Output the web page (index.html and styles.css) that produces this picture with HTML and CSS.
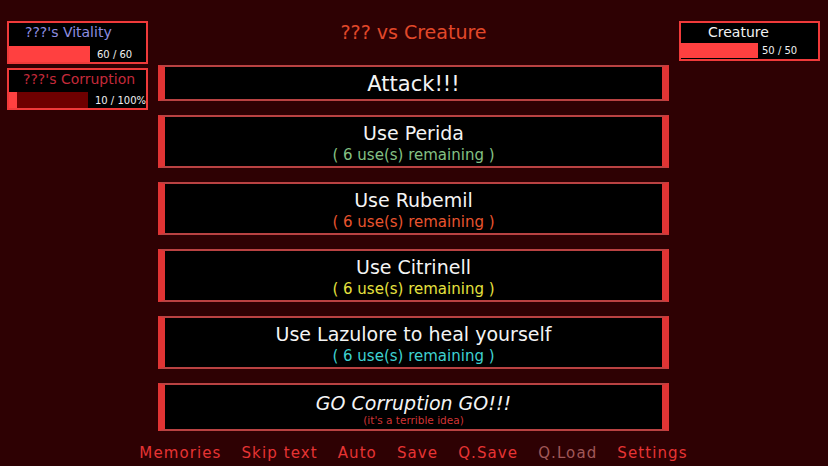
FILE: index.html
```html
<!DOCTYPE html>
<html>
<head>
<meta charset="utf-8">
<link rel="stylesheet" href="styles.css">
</head>
<body>
<div class="screen">
  <div class="side side-left">
    <div class="stat">
      <div class="stat-title vitality">???'s Vitality</div>
      <div class="stat-row">
        <div class="bar"><div class="fill" style="width:100%"></div></div>
        <div class="value">60 / 60</div>
      </div>
    </div>
    <div class="stat">
      <div class="stat-title corruption">???'s Corruption</div>
      <div class="stat-row">
        <div class="bar bar-dark"><div class="fill" style="width:10%"></div></div>
        <div class="value">10 / 100%</div>
      </div>
    </div>
  </div>

  <div class="center">
    <div class="headline">??? vs Creature</div>
    <div class="choices">
      <div class="choice choice-single"><span class="choice-main big">Attack!!!</span></div>
      <div class="choice choice-double">
        <span class="choice-main">Use Perida</span>
        <span class="choice-sub green">( 6 use(s) remaining )</span>
      </div>
      <div class="choice choice-double">
        <span class="choice-main">Use Rubemil</span>
        <span class="choice-sub orange">( 6 use(s) remaining )</span>
      </div>
      <div class="choice choice-double">
        <span class="choice-main">Use Citrinell</span>
        <span class="choice-sub yellow">( 6 use(s) remaining )</span>
      </div>
      <div class="choice choice-double">
        <span class="choice-main">Use Lazulore to heal yourself</span>
        <span class="choice-sub cyan">( 6 use(s) remaining )</span>
      </div>
      <div class="choice choice-go">
        <span class="choice-main italic">GO Corruption GO!!!</span>
        <span class="choice-note">(it's a terrible idea)</span>
      </div>
    </div>
  </div>

  <div class="side side-right">
    <div class="stat stat-creature">
      <div class="stat-title creature">Creature</div>
      <div class="stat-row">
        <div class="bar bar-creature"><div class="fill" style="width:100%"></div></div>
        <div class="value value-creature">50 / 50</div>
      </div>
    </div>
  </div>

  <nav class="quick-menu">
    <span class="qm">Memories</span>
    <span class="qm">Skip text</span>
    <span class="qm">Auto</span>
    <span class="qm">Save</span>
    <span class="qm">Q.Save</span>
    <span class="qm qm-disabled">Q.Load</span>
    <span class="qm">Settings</span>
  </nav>
</div>
</body>
</html>
```

FILE: styles.css
```css
* { box-sizing: border-box; }

html, body {
  margin: 0;
  padding: 0;
  background: #2e0103;
  width: 828px;
  height: 466px;
  overflow: hidden;
  font-family: "DejaVu Sans", "Liberation Sans", sans-serif;
}

.screen {
  display: grid;
  grid-template-columns: 141px 511px 141px;
  grid-template-rows: auto auto;
  column-gap: 10px;
  padding: 0 8px 0 7px;
}

.side {
  display: flex;
  flex-direction: column;
  gap: 4px;
  padding-top: 21px;
}

.stat {
  background: #000;
  border: 2px solid #f03a3a;
  height: 43px;
}

.stat + .stat {
  height: 42px;
}

.stat-creature {
  height: 40px;
}

.stat-title {
  font-size: 14px;
  line-height: 17px;
  height: 23px;
  padding-top: 1px;
  white-space: nowrap;
}

.vitality { color: #8e8ee0; padding-left: 16px; }
.corruption { color: #c42a3a; padding-left: 14px; height: 22px; }
.creature { color: #f2f2f2; padding-left: 27px; height: 20px; }

.stat-row {
  display: flex;
  align-items: center;
}

.bar {
  width: 81px;
  height: 16px;
  background: #000;
}

.bar-dark { background: #6e0000; }

.bar-creature {
  width: 78px;
  height: 15px;
  margin-left: -1px;
}

.fill {
  height: 100%;
  background: #ff4040;
}

.value {
  color: #f0f0f0;
  font-size: 10px;
  margin-left: 7px;
  white-space: nowrap;
}

.value-creature { margin-left: 4px; }

.center {
  display: flex;
  flex-direction: column;
}

.headline {
  margin-top: 21px;
  height: 22px;
  line-height: 22px;
  text-align: center;
  color: #e2482a;
  font-size: 19px;
}

.choices {
  margin-top: 22px;
  display: flex;
  flex-direction: column;
  gap: 14px;
}

.choice {
  background: #000;
  border-top: 2px solid #b94242;
  border-bottom: 2px solid #b94242;
  border-left: 7px solid #e03434;
  border-right: 7px solid #e03434;
  display: flex;
  flex-direction: column;
  align-items: center;
  text-align: center;
  color: #f4f4f4;
}

.choice-single {
  height: 36px;
  justify-content: center;
  padding-top: 2px;
}

.choice-double {
  height: 53px;
  padding-top: 5px;
}

.choice-go {
  height: 48px;
  padding-top: 7px;
}

.choice-main {
  font-size: 19px;
  line-height: 22px;
  white-space: nowrap;
}

.choice-main.big {
  font-size: 21px;
  line-height: 28px;
}

.choice-main.italic { font-style: italic; }

.choice-sub {
  font-size: 15px;
  line-height: 18px;
  margin-top: 2px;
  white-space: nowrap;
}

.green { color: #84c084; }
.orange { color: #e8542e; }
.yellow { color: #e6e23e; }
.cyan { color: #3ed2d2; }

.choice-note {
  font-size: 10.5px;
  line-height: 12px;
  color: #d03434;
}

.quick-menu {
  grid-column: 1 / -1;
  display: flex;
  justify-content: center;
  gap: 20px;
  margin-top: 13px;
  height: 18px;
  line-height: 18px;
}

.qm {
  font-size: 15px;
  letter-spacing: 1.1px;
  color: #e63434;
  white-space: nowrap;
}

.qm-disabled { color: #a05858; }
```
